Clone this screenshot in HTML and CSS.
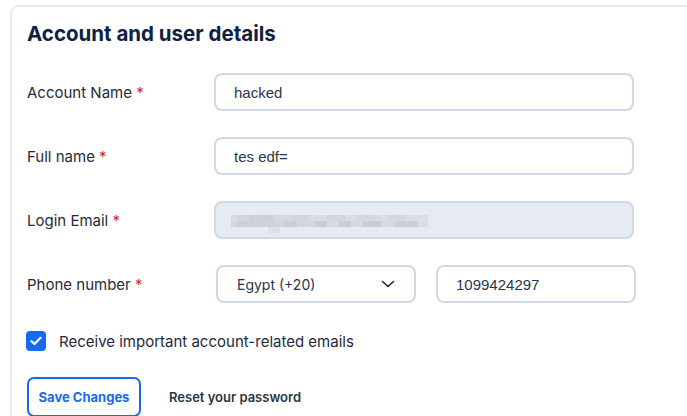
FILE: index.html
```html
<!DOCTYPE html>
<html>
<head>
<meta charset="utf-8">
<link rel="stylesheet" href="styles.css">
</head>
<body>
<section class="card">
  <h2 class="title">Account and user details</h2>
  <div class="form">
    <div class="row">
      <label class="label">Account Name <span class="req">*</span></label>
      <div class="input">hacked</div>
    </div>
    <div class="row">
      <label class="label">Full name <span class="req">*</span></label>
      <div class="input">tes edf=</div>
    </div>
    <div class="row">
      <label class="label">Login Email <span class="req">*</span></label>
      <div class="input disabled">
        <div class="mosaic"><i class="drip"></i></div>
      </div>
    </div>
    <div class="row">
      <label class="label">Phone number <span class="req">*</span></label>
      <div class="phone">
        <div class="input select">
          <span>Egypt (+20)</span>
          <svg class="chev" width="14" height="8" viewBox="0 0 14 8"><path d="M1.5 1.5 L7 6.5 L12.5 1.5" fill="none" stroke="#1e293b" stroke-width="1.6" stroke-linecap="round" stroke-linejoin="round"/></svg>
        </div>
        <div class="input num">1099424297</div>
      </div>
    </div>
  </div>
  <div class="check">
    <span class="box"><svg width="12" height="10" viewBox="0 0 12 10"><path d="M1.5 5.2 L4.5 8 L10.5 1.8" fill="none" stroke="#fff" stroke-width="2.2" stroke-linecap="round" stroke-linejoin="round"/></svg></span>
    <span class="check-text">Receive important account-related emails</span>
  </div>
  <div class="actions">
    <button class="btn">Save Changes</button>
    <a class="link">Reset your password</a>
  </div>
</section>
</body>
</html>
```
FILE: styles.css
```css
html, body {
  margin: 0;
  padding: 0;
  overflow: hidden;
  background: #fff;
}
body {
  font-family: Inter, "Noto Sans", sans-serif;
  color: #1f2a3a;
  height: 416px;
}
.card {
  margin: 5px 0 0 10px;
  width: 700px;
  height: 413px;
  border: 2px solid #e7eaf4;
  border-bottom: 0;
  border-radius: 9px 9px 0 0;
  box-sizing: border-box;
  padding: 12px 0 0 15px;
}
.title {
  margin: 0;
  font-size: 20.5px;
  line-height: 30px;
  font-weight: 700;
  color: #0e2241;
}
.form {
  margin-top: 24px;
  display: flex;
  flex-direction: column;
  gap: 26px;
}
.row {
  display: flex;
  align-items: center;
  height: 38px;
}
.label {
  width: 187px;
  font-size: 15px;
  color: #1f2a3a;
}
.req {
  color: #d8262c;
}
.input {
  box-sizing: border-box;
  width: 420px;
  height: 38px;
  border: 2px solid #d1d8e6;
  border-radius: 8px;
  padding: 0 18px;
  display: flex;
  align-items: center;
  font-family: "Liberation Sans", Arial, sans-serif;
  font-size: 15px;
  color: #2a3648;
  background: #fff;
}
.disabled {
  background: #e6eaf3;
  padding-left: 15px;
}
.mosaic {
  position: relative;
  width: 197px;
  height: 12px;
  margin-top: 1px;
  background:
    linear-gradient(to right,
      #d9dce6 0 6px, #d2d6e0 6px 18px, #ccd0da 18px 42px, #d4d8e2 42px 60px,
      #d0d4de 60px 78px, #d8dbe5 78px 96px, #d2d6e0 96px 114px, #d9dce6 114px 126px,
      #d3d7e1 126px 144px, #dadde6 144px 156px, #d3d7e1 156px 176px, #dcdfe8 176px 197px) top / 197px 6px no-repeat,
    linear-gradient(to right,
      #d4d8e2 0 6px, #ccd0da 6px 36px, #cfd3dd 36px 54px, #c9cdd8 54px 66px,
      #d3d7e1 66px 84px, #c8ccd7 84px 96px, #d6dae3 96px 108px, #c9cdd8 108px 120px,
      #d4d8e2 120px 132px, #c8ccd7 132px 150px, #d8dbe5 150px 162px, #cbcfd9 162px 186px, #d9dce6 186px 197px) bottom / 197px 6px no-repeat;
}
.drip {
  position: absolute;
  left: 37px;
  top: 12px;
  width: 12px;
  height: 6px;
  background: #dcdfe8;
}
.phone {
  display: flex;
  gap: 20px;
  margin-left: 2px;
}
.select {
  width: 200px;
  justify-content: space-between;
  font-family: Inter, "Noto Sans", sans-serif;
  font-size: 14px;
  padding: 0 19px 0 19px;
}
.chev {
  display: block;
}
.num {
  width: 200px;
}
.check {
  margin-top: 28px;
  display: flex;
  align-items: center;
  gap: 13px;
  margin-left: -1px;
}
.box {
  width: 20px;
  height: 20px;
  border-radius: 4px;
  background: #1769f0;
  display: flex;
  align-items: center;
  justify-content: center;
}
.check-text {
  font-size: 15px;
  color: #1f2a3a;
}
.actions {
  margin-top: 26px;
  display: flex;
  align-items: center;
  gap: 28px;
}
.btn {
  box-sizing: border-box;
  height: 40px;
  width: 114px;
  padding: 0;
  white-space: nowrap;
  border: 2px solid #1769f0;
  border-radius: 7px;
  background: #fff;
  color: #1769f0;
  font-family: Inter, "Noto Sans", sans-serif;
  font-size: 13px;
  font-weight: 700;
}
.link {
  font-size: 13px;
  font-weight: 600;
  color: #2b3544;
}
```
